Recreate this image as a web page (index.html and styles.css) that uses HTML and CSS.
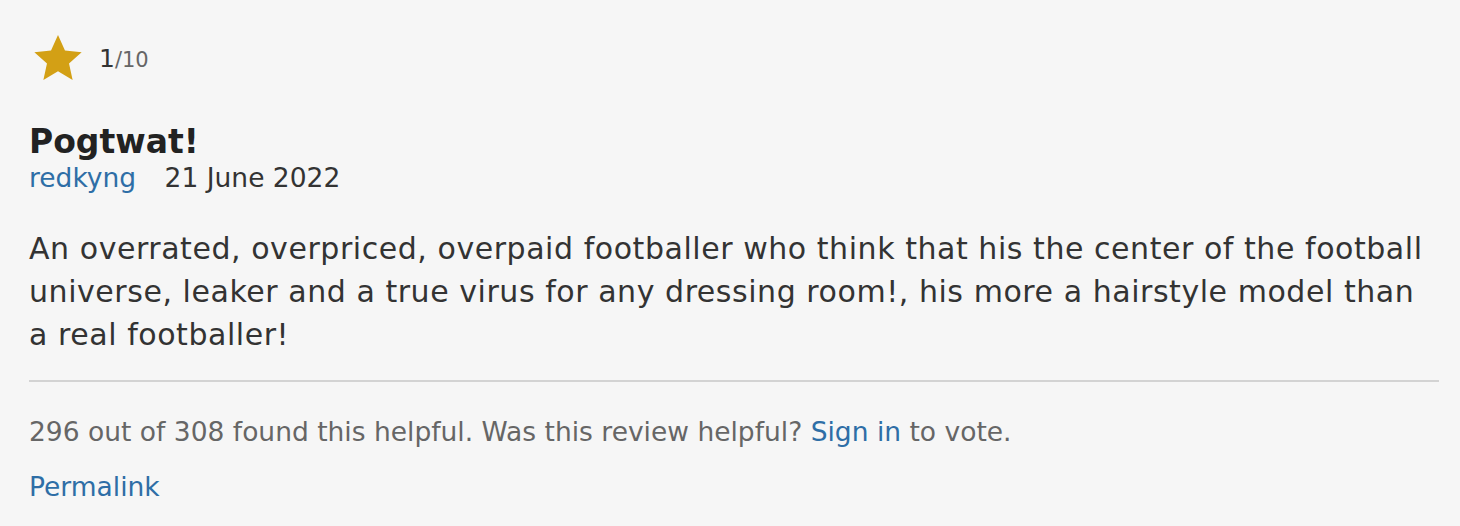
FILE: index.html
```html
<!DOCTYPE html>
<html lang="en">
<head>
  <meta charset="UTF-8" />
  <meta name="viewport" content="width=device-width, initial-scale=1.0" />
  <title>Review</title>
  <link rel="stylesheet" href="styles.css">
</head>
<body>
  <div class="review">
    <div class="rating">
      <svg class="star" viewBox="0 0 24 24" width="54" height="54">
        <path d="M12 1.8l3.1 6.9 7.4.7-5.6 5 1.6 7.4L12 17.9l-6.5 3.9 1.6-7.4-5.6-5 7.4-.7z" fill="#d3a015"/>
      </svg>
      <span class="score">1</span><span class="out-of">/10</span>
    </div>

    <div class="title">Pogtwat!</div>
    <div class="meta">
      <a href="#" class="author">redkyng</a>
      <span class="date">21 June 2022</span>
    </div>

    <div class="content">
      <p class="text">An overrated, overpriced, overpaid footballer who think that his the center of the football universe, leaker and a true virus for any dressing room!, his more a hairstyle model than a real footballer!</p>
    </div>

    <div class="actions">
      296 out of 308 found this helpful. Was this review helpful? <a href="#">Sign in</a> to vote.
    </div>
    <div class="permalink">
      <a href="#">Permalink</a>
    </div>
  </div>
</body>
</html>
```

FILE: styles.css
```css
body {
  margin: 0;
  background: #f6f6f6;
  font-family: "DejaVu Sans", Verdana, sans-serif;
  color: #333;
}
a {
  color: #2e6ea6;
  text-decoration: none;
}
.review {
  padding: 31px 21px 0 29px;
}
.rating {
  display: flex;
  align-items: center;
  height: 54px;
  margin-left: 2px;
}
.star {
  margin-right: 14px;
}
.score {
  font-size: 25px;
  color: #333;
  margin-top: 1px;
}
.out-of {
  font-size: 21px;
  color: #666;
  margin-top: 4px;
}
.title {
  margin-top: 37px;
  font-size: 33px;
  line-height: 40px;
  font-weight: bold;
  color: #222;
}
.meta {
  font-size: 26.5px;
  line-height: 32px;
}
.author {
  margin-right: 20px;
}
.content {
  margin-top: 33px;
  padding-bottom: 24px;
  border-bottom: 2px solid #d3d3d3;
}
.text {
  margin: 0 10px 0 0;
  font-size: 30px;
  line-height: 43px;
  letter-spacing: 0.55px;
}
.actions {
  margin-top: 34px;
  font-size: 26.5px;
  line-height: 32px;
  color: #666;
}
.permalink {
  margin-top: 23px;
  font-size: 26.5px;
  line-height: 32px;
}
```
